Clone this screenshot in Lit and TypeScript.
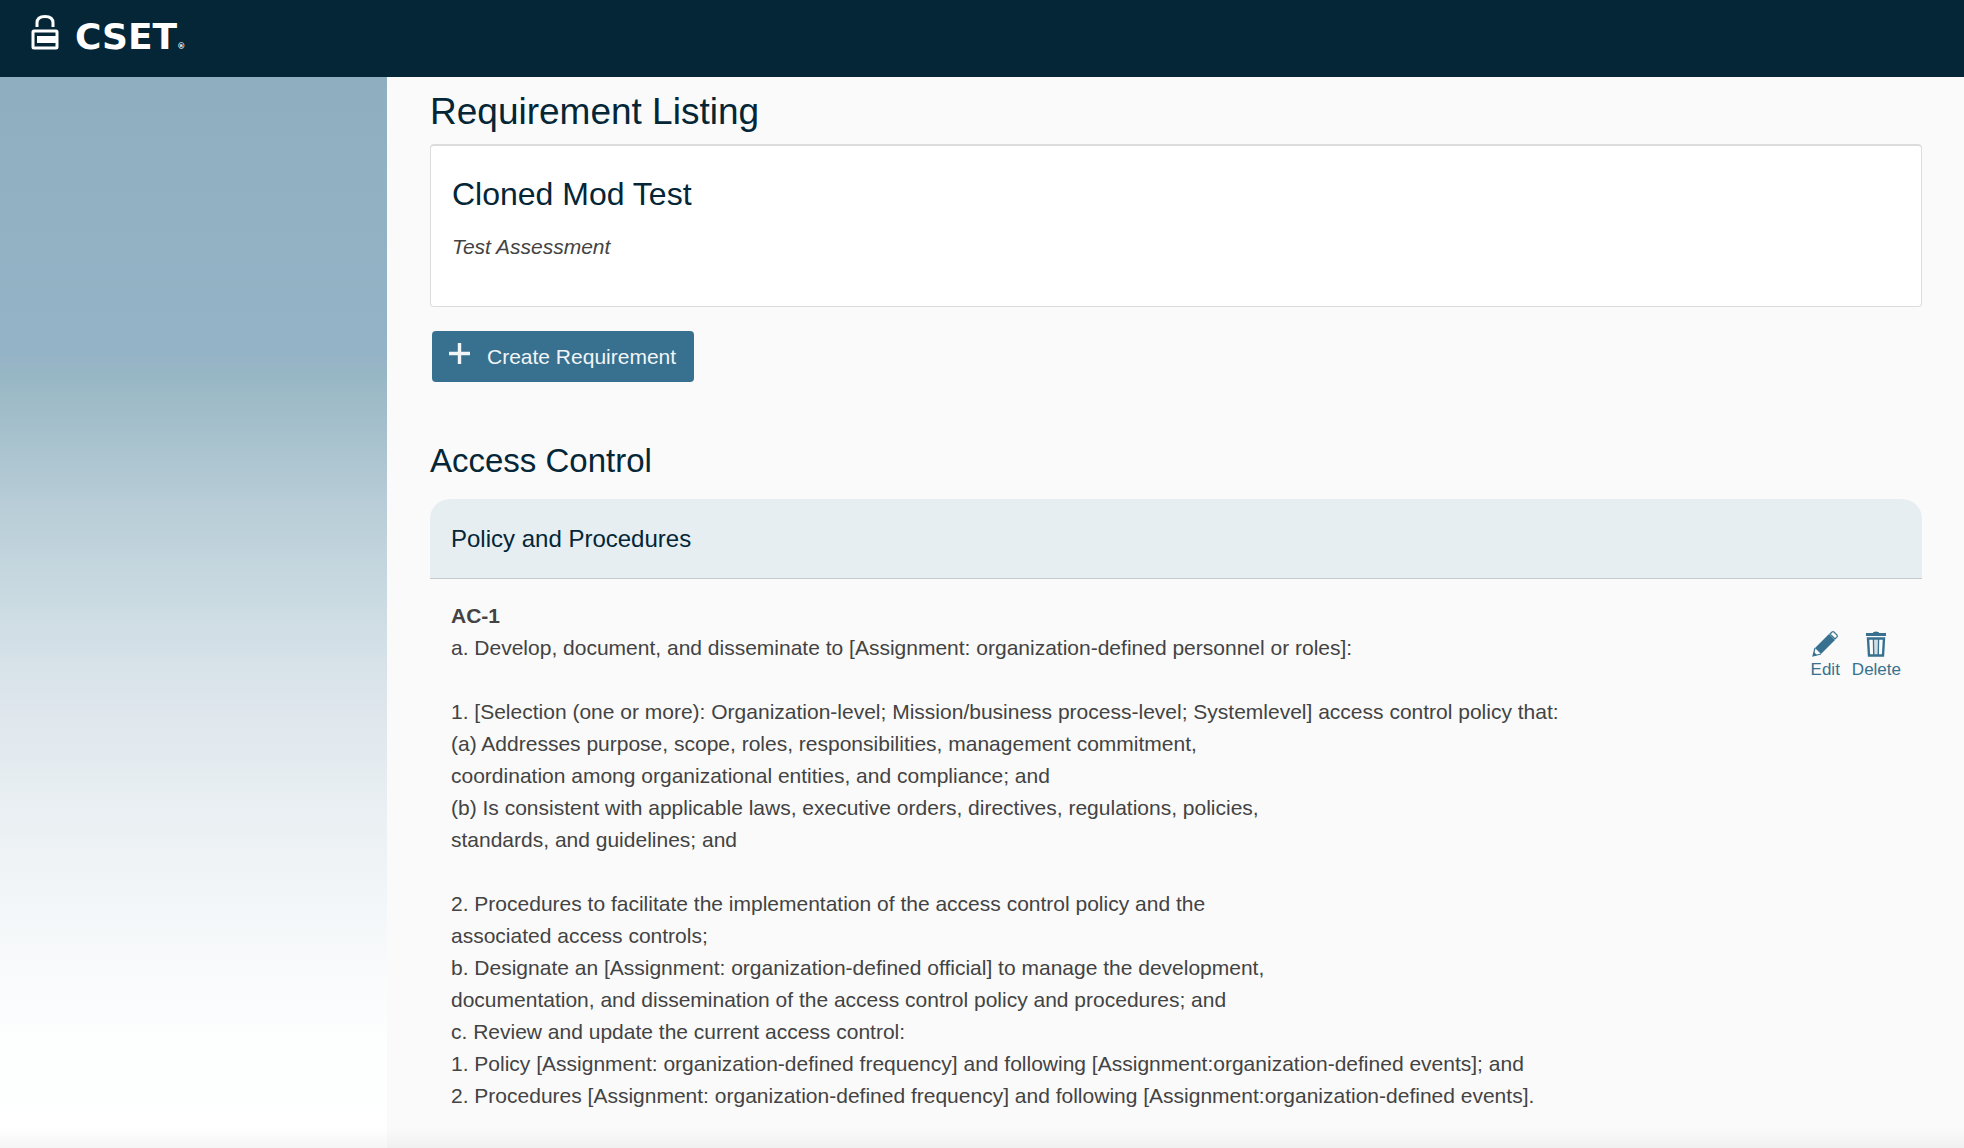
import { LitElement, html, css, svg } from "lit";
import { customElement, property } from "lit/decorators.js";

const ink = css`#042637`;

interface Requirement {
  title: string;
  text: string;
}

const requirements: Requirement[] = [
  {
    title: "AC-1",
    text: [
      "a. Develop, document, and disseminate to [Assignment: organization-defined personnel or roles]:",
      "",
      "1. [Selection (one or more): Organization-level; Mission/business process-level; Systemlevel] access control policy that:",
      "(a) Addresses purpose, scope, roles, responsibilities, management commitment,",
      "coordination among organizational entities, and compliance; and",
      "(b) Is consistent with applicable laws, executive orders, directives, regulations, policies,",
      "standards, and guidelines; and",
      "",
      "2. Procedures to facilitate the implementation of the access control policy and the",
      "associated access controls;",
      "b. Designate an [Assignment: organization-defined official] to manage the development,",
      "documentation, and dissemination of the access control policy and procedures; and",
      "c. Review and update the current access control:",
      "1. Policy [Assignment: organization-defined frequency] and following [Assignment:organization-defined events]; and",
      "2. Procedures [Assignment: organization-defined frequency] and following [Assignment:organization-defined events].",
    ].join("\n"),
  },
];

const pencil = svg`
  <path d="M3 17 L17 3 L23 9 L9 23 Z" fill="currentColor"/>
  <path d="M3 17 L1 25 L9 23" fill="none" stroke="currentColor" stroke-width="1.2"/>
  <path d="M1 25 L2 21 L5 24 Z" fill="currentColor"/>
  <path d="M18 3 L20 1 Q21 0.4 22 1 L25 4 Q25.6 5 25 6 L23 8 Z" fill="none" stroke="currentColor" stroke-width="1.2"/>`;

const trash = svg`
  <path d="M3 2 H10 Q10 0.5 13 0.5 Q16 0.5 16 2 H23 V5 H3 Z" fill="currentColor"/>
  <path d="M5 7.5 H21 L20 24.5 H6 Z" fill="none" stroke="currentColor" stroke-width="2.4"/>
  <path d="M10.5 8 L10.8 24 M15.5 8 L15.2 24" stroke="currentColor" stroke-width="1.5"/>
  <path d="M13 8 V24" stroke="currentColor" stroke-width="0.8" opacity="0.5"/>`;

@customElement("requirement-row")
export class RequirementRow extends LitElement {
  @property({ attribute: false }) requirement!: Requirement;

  static styles = css`
    :host {
      display: flex;
      justify-content: space-between;
      gap: 24px;
      padding: 21px;
    }
    .title {
      margin: 0;
      font-size: 21px;
      line-height: 32px;
      font-weight: 700;
    }
    .text {
      margin: 0;
      font-size: 21px;
      line-height: 32px;
      white-space: pre-line;
    }
    .actions {
      display: flex;
      align-items: flex-start;
      gap: 12px;
      padding-top: 31px;
    }
    .action {
      display: flex;
      flex-direction: column;
      align-items: center;
      gap: 3px;
      padding: 0;
      border: 0;
      background: none;
      color: #37718f;
      font: inherit;
      font-size: 17px;
      line-height: 20px;
      cursor: pointer;
    }
    .icon {
      width: 26px;
      height: 26px;
    }
  `;

  render() {
    return html`
      <div>
        <h4 class="title">${this.requirement.title}</h4>
        <p class="text">${this.requirement.text}</p>
      </div>
      <div class="actions">
        <button class="action" type="button">
          <svg class="icon" viewBox="0 0 26 26" aria-hidden="true">${pencil}</svg>
          Edit
        </button>
        <button class="action" type="button">
          <svg class="icon" viewBox="0 0 26 26" aria-hidden="true">${trash}</svg>
          Delete
        </button>
      </div>
    `;
  }
}

@customElement("app-root")
export class AppRoot extends LitElement {
  static styles = css`
    :host {
      display: flex;
      flex-direction: column;
      min-height: 100vh;
      background: #fafafa;
      color: #434343;
      font-family: "Liberation Sans", Arial, sans-serif;
    }
    .top {
      display: flex;
      background: ${ink};
      padding: 12px 31px;
      height: 53px;
    }
    .brand {
      display: flex;
      align-items: flex-start;
      gap: 16px;
      color: #fff;
      text-decoration: none;
    }
    .lock {
      width: 28px;
      height: 40px;
    }
    .name {
      font-family: "DejaVu Sans", sans-serif;
      font-weight: 700;
      font-size: 36px;
      line-height: 50px;
    }
    .mark {
      font-size: 8px;
    }
    .body {
      display: flex;
      flex: 1;
    }
    .side {
      flex: 0 0 387px;
      background: linear-gradient(
        #8fafc1 0%,
        #95b3c6 26%,
        #98b7c4 28%,
        #b8cdd7 40%,
        #cddce3 50%,
        #dde5ec 58%,
        #e9eff2 68%,
        #f4f7f9 78%,
        #fdfefe 90%,
        #ffffff 100%
      );
    }
    .main {
      flex: 1;
      min-width: 0;
      padding: 11px 42px 0 43px;
    }
    .heading {
      margin: 0;
      color: ${ink};
      font-weight: 400;
    }
    .page {
      font-size: 37px;
      line-height: 48px;
    }
    .card {
      margin-top: 8px;
      padding: 27px 21px 43px;
      border: 1px solid #dcdcdc;
      border-top-width: 2px;
      border-radius: 4px;
      background: #fff;
    }
    .section {
      font-size: 33px;
      line-height: 42px;
    }
    .card .section {
      font-size: 32px;
    }
    .note {
      margin: 16px 0 0;
      font-size: 21px;
      line-height: 32px;
    }
    .create {
      display: flex;
      align-items: center;
      gap: 15px;
      margin: 24px 2px 58px;
      padding: 0 18px 0 16px;
      height: 51px;
      border: 0;
      border-radius: 4px;
      background: #37718f;
      color: #f2f5f7;
      font: inherit;
      font-size: 21px;
      cursor: pointer;
    }
    .plus {
      width: 24px;
      height: 30px;
    }
    .group {
      margin-top: 17px;
      padding: 24px 21px;
      border-bottom: 1px solid #c5cacc;
      border-radius: 20px 20px 0 0;
      background: #e6eef2;
      font-size: 24px;
      line-height: 31px;
    }
    .fade {
      position: fixed;
      inset: auto 0 0 0;
      height: 20px;
      background: linear-gradient(rgba(0, 0, 0, 0), rgba(0, 0, 0, 0.04));
      pointer-events: none;
    }
  `;

  render() {
    return html`
      <header class="top">
        <a class="brand" href="#">
          <svg class="lock" viewBox="0 0 28 40" aria-hidden="true">
            <path
              d="M6 15 V11 Q6 4.5 14 4.5 Q22 4.5 22 11 V15"
              fill="none"
              stroke="#fff"
              stroke-width="3"
            />
            <rect x="2" y="19" width="24" height="17" rx="1" fill="none" stroke="#fff" stroke-width="3" />
            <rect x="6" y="24" width="20" height="7" fill="#fff" />
          </svg>
          <span class="name">CSET<span class="mark">®</span></span>
        </a>
      </header>
      <div class="body">
        <aside class="side"></aside>
        <main class="main">
          <h1 class="heading page">Requirement Listing</h1>
          <section class="card">
            <h2 class="heading section">Cloned Mod Test</h2>
            <p class="note"><em>Test Assessment</em></p>
          </section>
          <button class="create" type="button">
            <svg class="plus" viewBox="0 0 24 30" aria-hidden="true">
              <path d="M1 11.5 H22 M11.5 1 V22" stroke="currentColor" stroke-width="3.4" />
            </svg>
            Create Requirement
          </button>
          <h2 class="heading section">Access Control</h2>
          <h3 class="heading group">Policy and Procedures</h3>
          ${requirements.map((r) => html`<requirement-row .requirement=${r}></requirement-row>`)}
        </main>
      </div>
      <div class="fade"></div>
    `;
  }
}
